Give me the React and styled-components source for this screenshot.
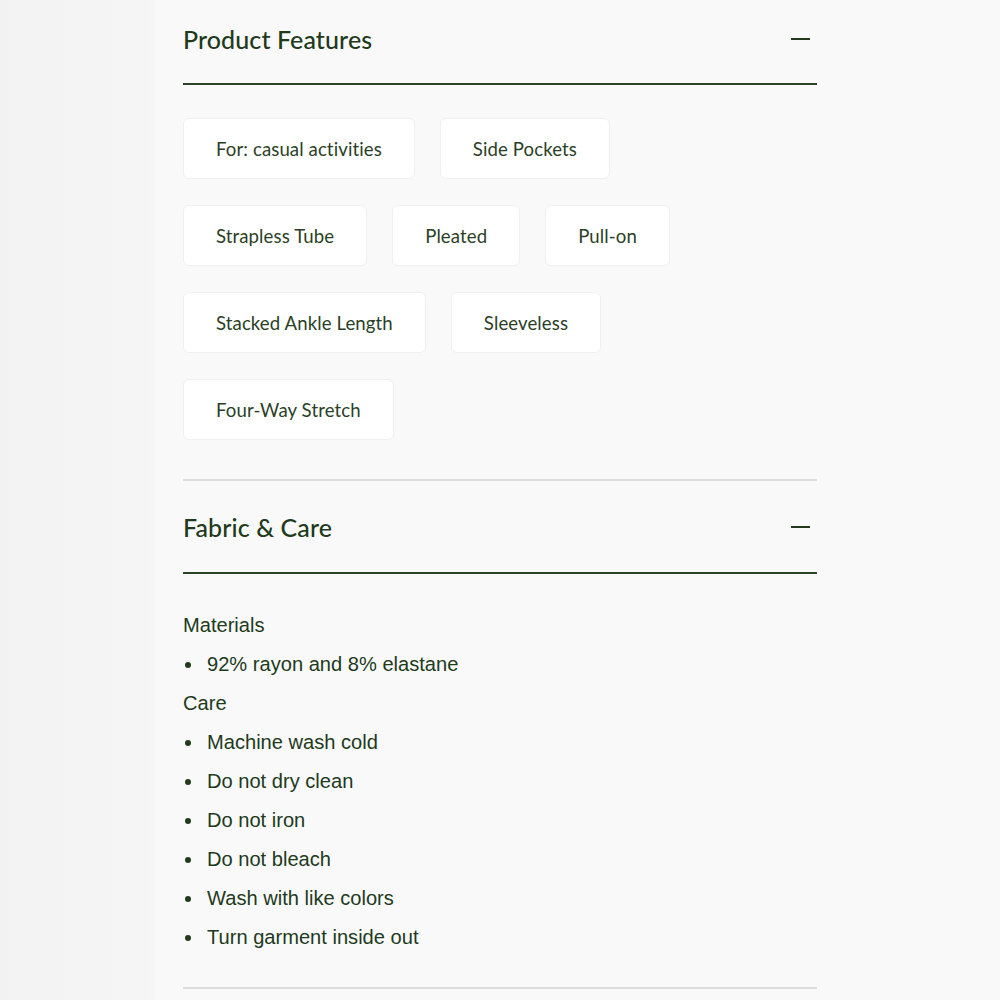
import React from "react";
import styled, { createGlobalStyle } from "styled-components";

const Global = createGlobalStyle`
  html, body { margin: 0; padding: 0; }
  body {
    background: linear-gradient(to right, #f2f2f2 0px, #f5f5f5 150px, #f9f9f9 157px, #f9f9f9 100%);
    color: #213a1c;
    font-family: Lato, "Liberation Sans", sans-serif;
  }
`;

const Page = styled.div`
  width: 1000px;
  min-height: 1000px;
  display: flex;
  justify-content: center;
`;

const Panel = styled.div`
  width: 634px;
  padding: 0 26px;
  background: #f9f9f9;
`;

const Section = styled.section`
  border-bottom: ${(p) => (p.$divider ? "2px solid #dcdcdc" : "none")};
  padding-bottom: ${(p) => p.$pb}px;
`;

const Header = styled.div`
  height: ${(p) => p.$h}px;
  padding-bottom: ${(p) => p.$shift}px;
  display: flex;
  align-items: center;
  justify-content: space-between;
  border-bottom: 2px solid #2b4427;
  box-sizing: border-box;
`;

const Title = styled.h2`
  margin: 0;
  font-family: Lato, "Liberation Sans", sans-serif;
  font-weight: 500;
  font-size: 25px;
  letter-spacing: 0.1px;
  color: #213a1c;
`;

const Minus = styled.span`
  display: block;
  width: 19px;
  height: 2px;
  background: #213a1c;
  margin-right: 7px;
`;

const Chips = styled.div`
  display: flex;
  flex-direction: column;
  gap: 26px;
  padding-top: 33px;
`;

const ChipRow = styled.div`
  display: flex;
  gap: 25px;
`;

const Chip = styled.div`
  height: 61px;
  padding: 0 32px;
  display: flex;
  align-items: center;
  background: #ffffff;
  border: 1px solid #f0f0f0;
  border-radius: 6px;
  box-sizing: border-box;
  font-family: Lato, "Liberation Sans", sans-serif;
  font-size: 18.6px;
  color: #2a3f26;
  letter-spacing: 0.1px;
`;

const Body = styled.div`
  padding-top: 32px;
  font-family: "Liberation Sans", Arial, sans-serif;
  font-size: 20.1px;
  color: #213a1c;
`;

const Label = styled.div`
  line-height: 39px;
`;

const List = styled.ul`
  margin: 0;
  padding: 0;
  list-style: none;
`;

const Item = styled.li`
  line-height: 39px;
  padding-left: 24px;
  position: relative;
  &::before {
    content: "";
    position: absolute;
    left: 2px;
    top: 17px;
    width: 6px;
    height: 6px;
    border-radius: 50%;
    background: #213a1c;
  }
`;

const rows = [
  ["For: casual activities", "Side Pockets"],
  ["Strapless Tube", "Pleated", "Pull-on"],
  ["Stacked Ankle Length", "Sleeveless"],
  ["Four-Way Stretch"],
];

const care = [
  "Machine wash cold",
  "Do not dry clean",
  "Do not iron",
  "Do not bleach",
  "Wash with like colors",
  "Turn garment inside out",
];

export default function App() {
  return (
    <>
      <Global />
      <Page>
        <Panel>
          <Section $divider $pb={39}>
            <Header $h={85} $shift={6}>
              <Title>Product Features</Title>
              <Minus />
            </Header>
            <Chips>
              {rows.map((r, i) => (
                <ChipRow key={i}>
                  {r.map((c) => (
                    <Chip key={c}>{c}</Chip>
                  ))}
                </ChipRow>
              ))}
            </Chips>
          </Section>
          <Section $divider $pb={30}>
            <Header $h={93} $shift={0}>
              <Title>Fabric &amp; Care</Title>
              <Minus />
            </Header>
            <Body>
              <Label>Materials</Label>
              <List>
                <Item>92% rayon and 8% elastane</Item>
              </List>
              <Label>Care</Label>
              <List>
                {care.map((c) => (
                  <Item key={c}>{c}</Item>
                ))}
              </List>
            </Body>
          </Section>
        </Panel>
      </Page>
    </>
  );
}
